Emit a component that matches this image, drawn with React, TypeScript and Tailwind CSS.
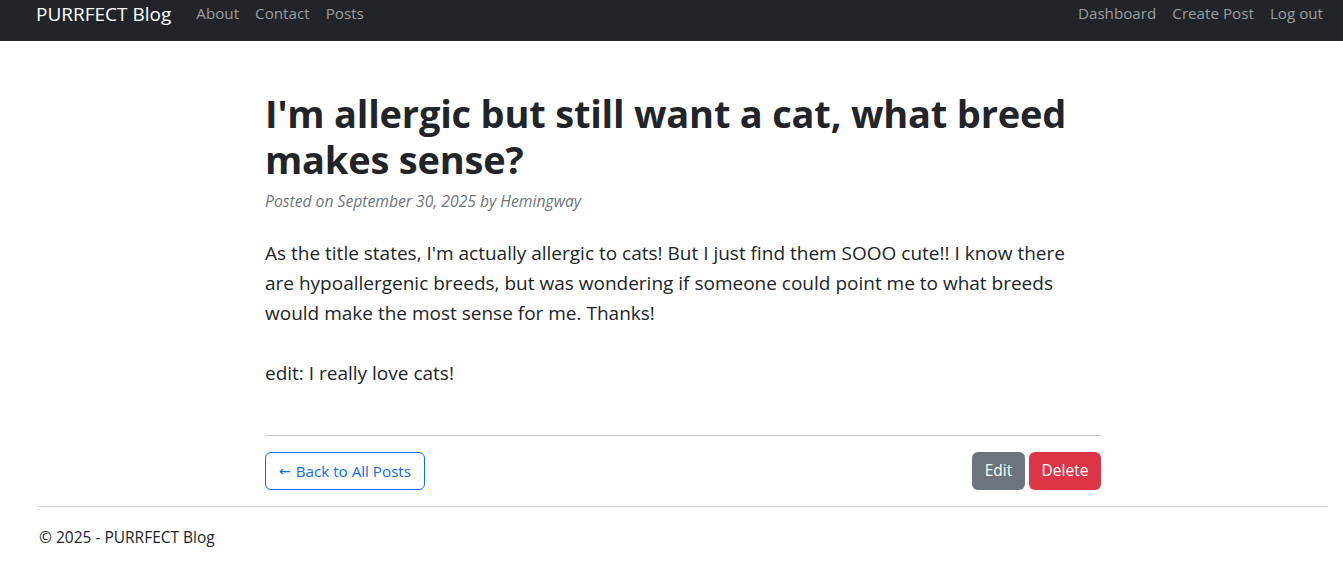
import React from "react";

const font = { fontFamily: '"Open Sans", "Noto Sans", sans-serif' };

export default function App() {
  return (
    <div className="min-h-[576px] bg-white text-[#212529]" style={font}>
      <nav className="h-[41px] bg-[#212529] flex items-start justify-between">
        <div className="flex items-start">
          <span className="ml-[36px] text-[19px] leading-[28px] text-white">PURRFECT Blog</span>
          <div className="ml-[25px] flex gap-[16px] pt-[1px] text-[15.2px] leading-[24px] text-[#9b9d9f]">
            <span>About</span>
            <span>Contact</span>
            <span>Posts</span>
          </div>
        </div>
        <div className="mr-[20px] flex gap-[16px] pt-[1px] text-[15.2px] leading-[24px] text-[#9b9d9f]">
          <span>Dashboard</span>
          <span>Create Post</span>
          <span>Log out</span>
        </div>
      </nav>

      <main className="ml-[265px] w-[836px]">
        <h1 className="mt-[49px] text-[38px] leading-[46px] font-bold tracking-[-0.2px]">
          I'm allergic but still want a cat, what breed makes sense?
        </h1>
        <p className="mt-[7px] text-[15.7px] leading-[24px] italic text-[#6c757d]">
          Posted on September 30, 2025 by Hemingway
        </p>
        <div className="mt-[25px] text-[19px] leading-[30px] text-[#212529]">
          <div className="whitespace-nowrap">As the title states, I'm actually allergic to cats! But I just find them SOOO cute!! I know there</div>
          <div className="whitespace-nowrap">are hypoallergenic breeds, but was wondering if someone could point me to what breeds</div>
          <div className="whitespace-nowrap">would make the most sense for me. Thanks!</div>
          <div className="h-[30px]" />
          <div>edit: I really love cats!</div>
        </div>
        <hr className="mt-[47px] border-0 border-t border-[#c8c9ca]" />
        <div className="mt-[16px] flex justify-between">
          <button className="h-[38px] w-[160px] flex items-center justify-center gap-[5px] rounded-[6px] border border-[#0d6efd] text-[#0d6efd] text-[15.2px]">
            <span className="text-[14px]" style={{ fontFamily: '"DejaVu Sans", sans-serif' }}>←</span>
            <span>Back to All Posts</span>
          </button>
          <div className="flex gap-[4px]">
            <button className="h-[38px] w-[53px] rounded-[6px] bg-[#6c757d] text-white text-[15.5px]">Edit</button>
            <button className="h-[38px] w-[72px] rounded-[6px] bg-[#dc3545] text-white text-[15.5px]">Delete</button>
          </div>
        </div>
      </main>

      <footer className="ml-[38px] mr-[15px]">
        <hr className="mt-[16px] border-0 border-t border-[#c8c9ca]" />
        <p className="mt-[18px] ml-[1px] text-[15.5px] leading-[24px]">© 2025 - PURRFECT Blog</p>
      </footer>
    </div>
  );
}
